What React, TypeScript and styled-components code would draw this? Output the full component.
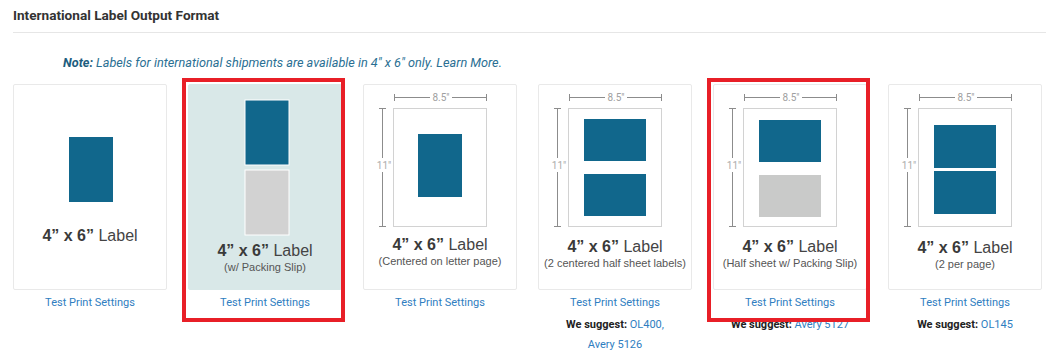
import styled, { createGlobalStyle } from "styled-components";

const GlobalStyle = createGlobalStyle`
  html, body {
    margin: 0;
    padding: 0;
    background: #fff;
  }
  body {
    font-family: Roboto, "Liberation Sans", Arial, sans-serif;
  }
`;

const BLUE = "#11678c";
const DIM = "#8c8c8c";

type Block = { x: number; y: number; w: number; h: number; gray?: string; outline?: boolean };

interface IFormat {
  id: number;
  letter: boolean;
  figHeight: number;
  blocks: Block[];
  sub?: string;
  highlighted?: boolean;
  selected?: boolean;
  suggest?: string[];
}

const formats: IFormat[] = [
  { id: 1, letter: false, figHeight: 141, blocks: [{ x: 56, y: 53, w: 44, h: 65 }] },
  {
    id: 2,
    letter: false,
    figHeight: 156,
    highlighted: true,
    selected: true,
    sub: "(w/ Packing Slip)",
    blocks: [
      { x: 57, y: 16, w: 44, h: 65, outline: true },
      { x: 57, y: 86, w: 44, h: 65, gray: "#d2d2d2", outline: true }
    ]
  },
  {
    id: 3,
    letter: true,
    figHeight: 150,
    sub: "(Centered on letter page)",
    blocks: [{ x: 55, y: 50, w: 44, h: 63 }]
  },
  {
    id: 4,
    letter: true,
    figHeight: 152,
    sub: "(2 centered half sheet labels)",
    suggest: ["OL400,", "Avery 5126"],
    blocks: [
      { x: 46, y: 35, w: 62, h: 42 },
      { x: 46, y: 90, w: 62, h: 42 }
    ]
  },
  {
    id: 5,
    letter: true,
    figHeight: 152,
    selected: true,
    sub: "(Half sheet w/ Packing Slip)",
    suggest: ["Avery 5127"],
    blocks: [
      { x: 46, y: 36, w: 62, h: 42 },
      { x: 46, y: 91, w: 62, h: 42, gray: "#c9cac9" }
    ]
  },
  {
    id: 6,
    letter: true,
    figHeight: 153,
    sub: "(2 per page)",
    suggest: ["OL145"],
    blocks: [
      { x: 46, y: 41, w: 62, h: 43 },
      { x: 46, y: 87, w: 62, h: 43 }
    ]
  }
];

const Figure = ({ f }: { f: IFormat }) => (
  <svg width={154} height={f.figHeight} viewBox={`0 0 154 ${f.figHeight}`}>
    {f.letter && (
      <g>
        {/* width dimension */}
        <line x1={31} y1={13.5} x2={67} y2={13.5} stroke={DIM} />
        <line x1={89} y1={13.5} x2={124} y2={13.5} stroke={DIM} />
        <line x1={31.5} y1={10} x2={31.5} y2={17} stroke={DIM} />
        <line x1={123.5} y1={10} x2={123.5} y2={17} stroke={DIM} />
        <text x={78} y={17} textAnchor="middle" fontSize={10} fill="#a0a0a0" fontFamily="Roboto, sans-serif">
          8.5"
        </text>
        {/* height dimension */}
        <line x1={19.5} y1={24} x2={19.5} y2={74} stroke={DIM} />
        <line x1={19.5} y1={88} x2={19.5} y2={143} stroke={DIM} />
        <line x1={16} y1={24.5} x2={23} y2={24.5} stroke={DIM} />
        <line x1={16} y1={142.5} x2={23} y2={142.5} stroke={DIM} />
        <text x={21} y={85} textAnchor="middle" fontSize={10} fill="#ababab" fontFamily="Roboto, sans-serif">
          11"
        </text>
        {/* page */}
        <rect x={30.5} y={24.5} width={93} height={118} fill="#fff" stroke="#d2d2d2" />
      </g>
    )}
    {f.blocks.map((b, i) => (
      <rect
        key={i}
        x={b.x}
        y={b.y}
        width={b.w}
        height={b.h}
        fill={b.gray || BLUE}
        stroke={b.outline ? "#fff" : "none"}
        strokeWidth={1}
      />
    ))}
  </svg>
);

export default function App() {
  return (
    <>
      <GlobalStyle />
      <Page>
        <Title>International Label Output Format</Title>
        <Divider />
        <Note>
          <b>Note:</b> Labels for international shipments are available in 4" x 6" only. Learn More.
        </Note>
        <Row>
          {formats.map((f) => (
            <Column key={f.id}>
              <Card $highlighted={f.highlighted}>
                <Figure f={f} />
                <Caption>
                  <b>4” x 6”</b> Label
                </Caption>
                {f.sub && <SubCaption>{f.sub}</SubCaption>}
              </Card>
              <Link>Test Print Settings</Link>
              {f.suggest && (
                <Suggest>
                  <b>We suggest:</b> <span>{f.suggest[0]}</span>
                  {f.suggest[1] && (
                    <>
                      <br />
                      <span>{f.suggest[1]}</span>
                    </>
                  )}
                </Suggest>
              )}
              {f.selected && <SelectedFrame />}
            </Column>
          ))}
        </Row>
      </Page>
    </>
  );
}

const Page = styled.div`
  width: 1046px;
  height: 352px;
  overflow: hidden;
  padding: 7px 0 0 13px;
  box-sizing: border-box;
`;

const Title = styled.h2`
  margin: 0;
  font-size: 13.6px;
  line-height: 17px;
  font-weight: 700;
  color: #333;
`;

const Divider = styled.div`
  margin-top: 8px;
  height: 1px;
  background: #e6e6e6;
`;

const Note = styled.div`
  margin: 23px 0 0 50px;
  font-size: 12.7px;
  line-height: 14px;
  font-style: italic;
  color: #2a6f93;
  b {
    color: #1c5d7e;
  }
`;

const Row = styled.div`
  display: flex;
  gap: 21px;
  margin-top: 14px;
`;

const Column = styled.div`
  position: relative;
  width: 154px;
  display: flex;
  flex-direction: column;
  align-items: center;
`;

const Card = styled.div<{ $highlighted?: boolean }>`
  width: 154px;
  height: 206px;
  box-sizing: border-box;
  display: flex;
  flex-direction: column;
  align-items: center;
  background: ${(p) => (p.$highlighted ? "#d9e8e8" : "#fff")};
  border: 1px solid ${(p) => (p.$highlighted ? "#d9e8e8" : "#e9e9e9")};
  border-radius: 2px;
  svg {
    display: block;
    margin-top: -1px;
    margin-left: -1px;
    flex-shrink: 0;
  }
`;

const Caption = styled.div`
  margin-top: 2px;
  font-family: "Liberation Sans", Arial, sans-serif;
  font-size: 16px;
  line-height: 18px;
  color: #444;
  b {
    color: #3a3a3a;
  }
`;

const SubCaption = styled.div`
  margin-top: 0px;
  font-family: "Liberation Sans", Arial, sans-serif;
  font-size: 11px;
  line-height: 14px;
  color: #555;
`;

const Link = styled.a`
  margin-top: 6px;
  font-size: 11px;
  line-height: 14px;
  color: #2f7ec1;
  cursor: pointer;
`;

const Suggest = styled.div`
  margin-top: 5px;
  font-size: 11px;
  line-height: 20px;
  text-align: center;
  color: #222;
  b {
    font-weight: 700;
  }
  span {
    color: #2f7ec1;
  }
`;

const SelectedFrame = styled.div`
  position: absolute;
  left: -6px;
  top: -6px;
  width: 163px;
  height: 244px;
  box-sizing: border-box;
  border: 4px solid #e81f27;
  pointer-events: none;
`;
